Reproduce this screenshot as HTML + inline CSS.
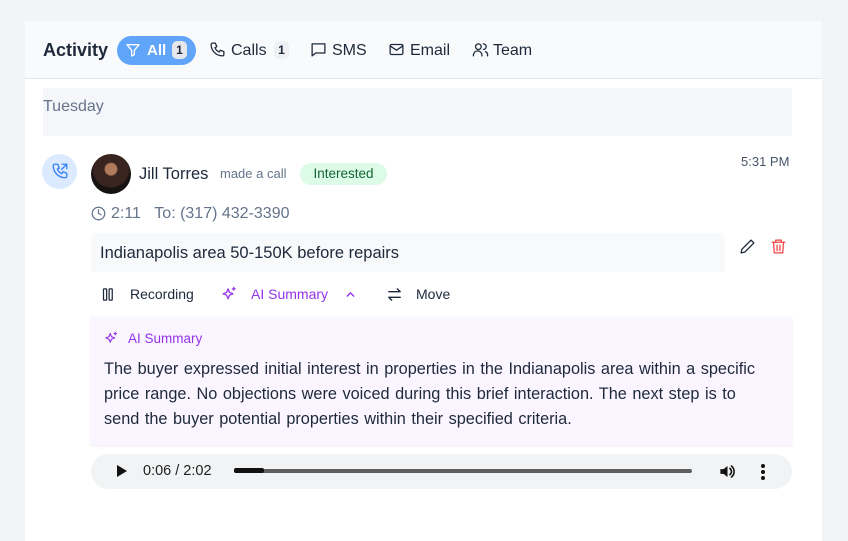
<!DOCTYPE html>
<html><head><style>
*{box-sizing:border-box;margin:0;padding:0}
body{width:848px;height:529px;background:#f3f4f7;font-family:"Liberation Sans",sans-serif;position:relative;overflow:hidden;color:#1e293b}
.a{position:absolute;white-space:nowrap}
.card{position:absolute;left:25px;top:21px;width:797px;height:520px;background:#fff}
.hdr{position:absolute;left:25px;top:21px;width:797px;height:58px;background:#f8fafc;border-bottom:1px solid #e5e7eb}
svg{position:absolute;fill:none;stroke-linecap:round;stroke-linejoin:round}
</style></head><body>
<div class="card"></div>
<div class="hdr"></div>
<div class="a" style="left:43px;top:40px;font-size:18px;font-weight:bold;color:#1e293b">Activity</div>
<div class="a" style="left:117px;top:36px;width:79px;height:29px;border-radius:15px;background:#60a5fa"></div>
<svg style="left:125px;top:42px" width="16" height="16" viewBox="0 0 24 24" stroke="#fff" stroke-width="2"><path d="M3 4h18l-7 8.5V19l-4 2v-8.5z"/></svg>
<div class="a" style="left:147px;top:42px;font-size:15px;font-weight:bold;color:#fff">All</div>
<div class="a" style="left:172px;top:41px;width:15px;height:18px;border-radius:5px;background:#e5e7eb;font-size:12px;font-weight:bold;text-align:center;line-height:18px;color:#1e293b">1</div>
<svg style="left:209px;top:41px" width="17" height="17" viewBox="0 0 24 24" stroke="#1e293b" stroke-width="1.8"><path d="M5 3h4l2 5-2.5 1.5a11 11 0 0 0 6 6L16 13l5 2v4a2 2 0 0 1-2 2A16 16 0 0 1 3 5a2 2 0 0 1 2-2"/></svg>
<div class="a" style="left:231px;top:42px;font-size:16px">Calls</div>
<div class="a" style="left:274px;top:41px;width:15px;height:18px;border-radius:5px;background:#eef0f3;font-size:12px;font-weight:bold;text-align:center;line-height:18px">1</div>
<svg style="left:310px;top:41px" width="17" height="17" viewBox="0 0 24 24" stroke="#1e293b" stroke-width="1.8"><path d="M3 4h18v13H8l-5 4z"/></svg>
<div class="a" style="left:332px;top:42px;font-size:16px">SMS</div>
<svg style="left:388px;top:41px" width="17" height="17" viewBox="0 0 24 24" stroke="#1e293b" stroke-width="1.8"><rect x="3" y="5" width="18" height="14" rx="2"/><path d="M3 7l9 6 9-6"/></svg>
<div class="a" style="left:410px;top:42px;font-size:16px">Email</div>
<svg style="left:472px;top:41px" width="17" height="17" viewBox="0 0 24 24" stroke="#1e293b" stroke-width="1.8"><circle cx="9" cy="8" r="4"/><path d="M2 21v-1a6 6 0 0 1 12 0v1M16 4a4 4 0 0 1 0 8M19 15a5 5 0 0 1 3 5v1"/></svg>
<div class="a" style="left:493px;top:42px;font-size:16px">Team</div>

<div class="a" style="left:43px;top:88px;width:749px;height:48px;background:#f5f6f9"></div>
<div class="a" style="left:43px;top:98px;font-size:16px;color:#64748b">Tuesday</div>

<div class="a" style="left:42px;top:154px;width:35px;height:35px;border-radius:50%;background:#dbeafe"></div>
<svg style="left:51px;top:162px" width="18" height="18" viewBox="0 0 24 24" stroke="#3b82f6" stroke-width="1.8"><path d="M5 3h4l2 5-2.5 1.5a11 11 0 0 0 6 6L16 13l5 2v4a2 2 0 0 1-2 2A16 16 0 0 1 3 5a2 2 0 0 1 2-2M15 3h6v6M14 10l7-7"/></svg>
<div class="a" style="left:91px;top:154px;width:40px;height:40px;border-radius:50%;background:radial-gradient(circle at 50% 38%,#b07a5c 0 18%,#3a2420 22% 55%,#161212 60%),#2a2220"></div>
<div class="a" style="left:139px;top:165px;font-size:16.5px;color:#1e293b">Jill Torres</div>
<div class="a" style="left:220px;top:166px;font-size:13px;color:#64748b">made a call</div>
<div class="a" style="left:300px;top:163px;width:87px;height:22px;border-radius:11px;background:#dcfce7;color:#166534;font-size:13.5px;text-align:center;line-height:22px">Interested</div>
<div class="a" style="left:741px;top:154px;font-size:13px;color:#475569">5:31 PM</div>

<svg style="left:91px;top:206px" width="15" height="15" viewBox="0 0 24 24" stroke="#64748b" stroke-width="2"><circle cx="12" cy="12" r="10"/><path d="M12 6v6l4 2"/></svg>
<div class="a" style="left:111px;top:205px;font-size:16px;color:#64748b">2:11&nbsp;&nbsp;&nbsp;To: (317) 432-3390</div>

<div class="a" style="left:91px;top:233px;width:634px;height:39px;border-radius:4px;background:#f8f9fb"></div>
<div class="a" style="left:100px;top:244px;font-size:16.5px;color:#1e293b">Indianapolis area 50-150K before repairs</div>
<svg style="left:739px;top:238px" width="17" height="17" viewBox="0 0 24 24" stroke="#1e293b" stroke-width="1.8"><path d="M17 3l4 4L8 20l-5 1 1-5z"/></svg>
<svg style="left:770px;top:238px" width="17" height="17" viewBox="0 0 24 24" stroke="#ef4444" stroke-width="1.8"><path d="M3 6h18M8 6V3h8v3M5 6l1 15h12l1-15M10 10v8M14 10v8"/></svg>

<svg style="left:101px;top:287px" width="15" height="15" viewBox="0 0 24 24" stroke="#1e293b" stroke-width="2"><rect x="4" y="3" width="5" height="18" rx="1"/><rect x="13" y="3" width="5" height="18" rx="1"/></svg>
<div class="a" style="left:130px;top:286px;font-size:14px;color:#1e293b">Recording</div>
<svg style="left:221px;top:286px" width="17" height="17" viewBox="0 0 24 24" stroke="#9333ea" stroke-width="1.8"><path d="M10 4l2 5 5 2-5 2-2 5-2-5-5-2 5-2zM18 2v4M16 4h4"/></svg>
<div class="a" style="left:251px;top:286px;font-size:14px;color:#9333ea">AI Summary</div>
<svg style="left:344px;top:288px" width="13" height="13" viewBox="0 0 24 24" stroke="#9333ea" stroke-width="2.5"><path d="M6 15l6-6 6 6"/></svg>
<svg style="left:386px;top:286px" width="17" height="17" viewBox="0 0 24 24" stroke="#1e293b" stroke-width="2"><path d="M4 8h16l-4-4M20 16H4l4 4"/></svg>
<div class="a" style="left:416px;top:286px;font-size:14px;color:#1e293b">Move</div>

<div class="a" style="left:91px;top:317px;width:701px;height:128px;background:#faf5ff;box-shadow:0 1px 3px rgba(0,0,0,.08)"></div>
<svg style="left:104px;top:331px" width="15" height="15" viewBox="0 0 24 24" stroke="#9333ea" stroke-width="1.8"><path d="M10 4l2 5 5 2-5 2-2 5-2-5-5-2 5-2zM18 2v4M16 4h4"/></svg>
<div class="a" style="left:128px;top:331px;font-size:13.5px;color:#9333ea">AI Summary</div>
<div class="a" style="left:104px;top:357px;font-size:16.3px;line-height:25px;color:#1e293b;white-space:normal;width:662px;word-spacing:1px">The buyer expressed initial interest in properties in the Indianapolis area within a specific price range. No objections were voiced during this brief interaction. The next step is to send the buyer potential properties within their specified criteria.</div>

<div class="a" style="left:91px;top:454px;width:701px;height:35px;border-radius:18px;background:#f1f3f4"></div>
<svg style="left:113px;top:463px" width="16" height="16" viewBox="0 0 24 24"><path d="M6 3l15 9-15 9z" fill="#111"/></svg>
<div class="a" style="left:143px;top:463px;font-size:14.5px;color:#1e1e1e">0:06 / 2:02</div>
<div class="a" style="left:234px;top:469px;width:458px;height:4px;border-radius:2px;background:#5f5f5f"></div>
<div class="a" style="left:234px;top:468px;width:30px;height:5px;border-radius:2px;background:#111"></div>
<svg style="left:718px;top:462px" width="19" height="19" viewBox="0 0 24 24"><path d="M3 9h4l5-4v14l-5-4H3z" fill="#111"/><path d="M15 8a5 5 0 0 1 0 8M17 5a9 9 0 0 1 0 14" stroke="#111" stroke-width="2"/></svg>
<div class="a" style="left:761px;top:464px;width:4px;height:4px;border-radius:2px;background:#111;box-shadow:0 6px 0 #111,0 12px 0 #111"></div>
</body></html>
